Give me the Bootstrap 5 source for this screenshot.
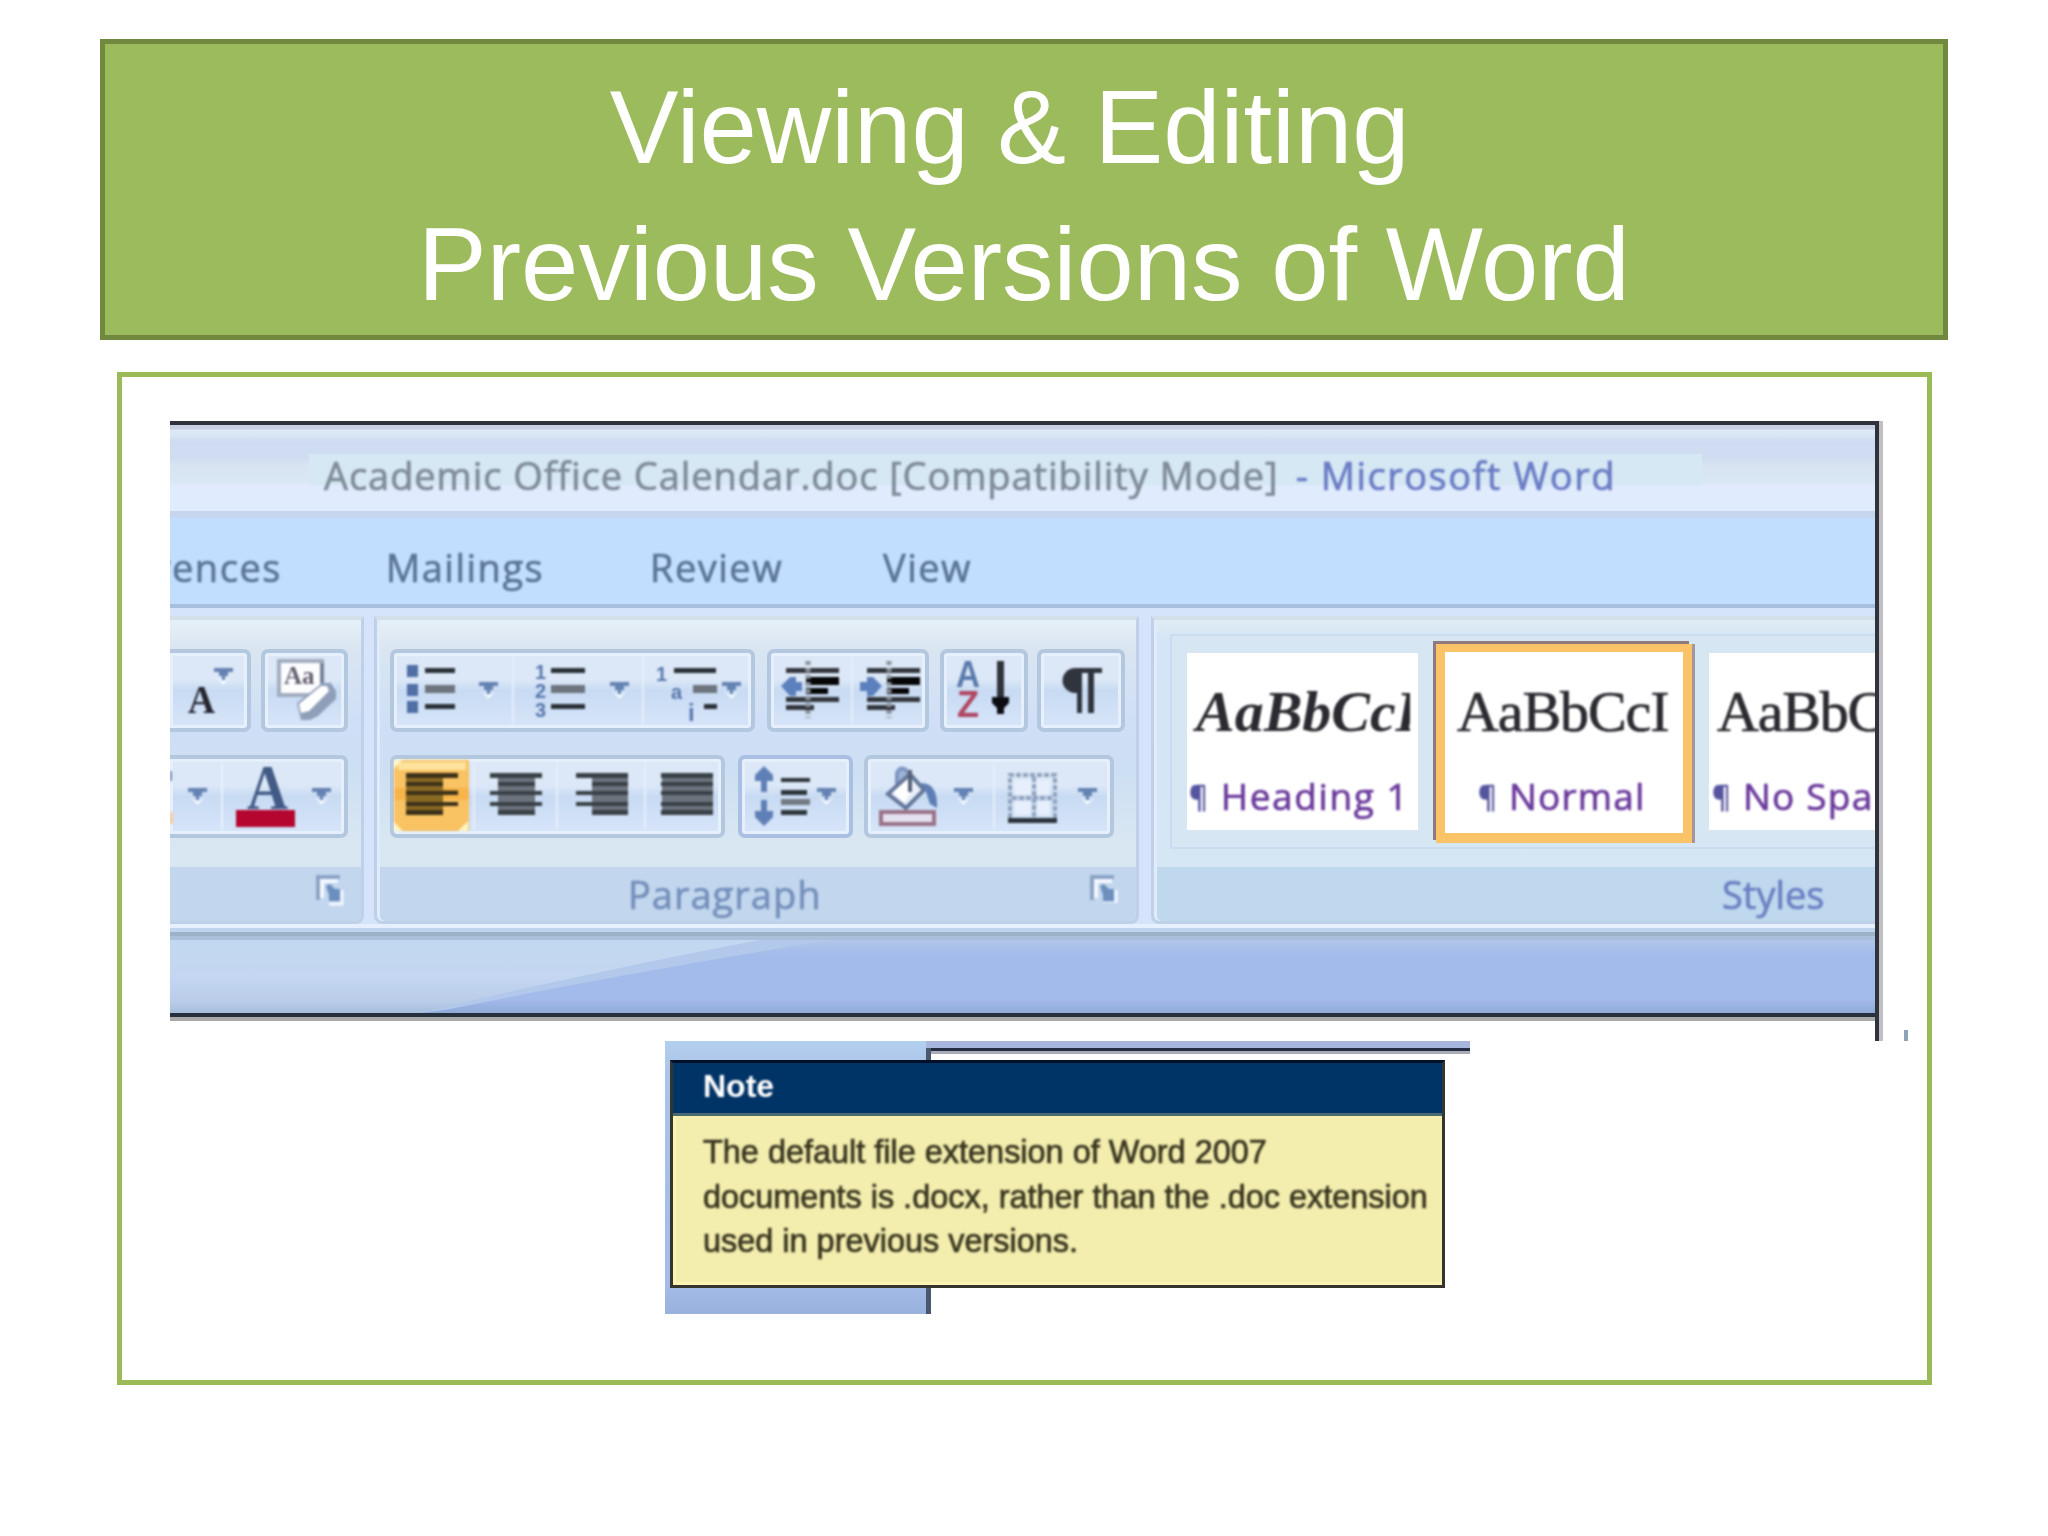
<!DOCTYPE html>
<html lang="en">
<head>
<meta charset="utf-8">
<title>Viewing &amp; Editing Previous Versions of Word</title>
<link rel="stylesheet" href="https://cdn.jsdelivr.net/npm/bootstrap@5.3.0/dist/css/bootstrap.min.css">
<script src="https://cdn.jsdelivr.net/npm/bootstrap@5.3.0/dist/js/bootstrap.bundle.min.js"></script>
<style>
body{width:2048px;height:1536px;overflow:hidden;background:#fff;font-family:"Liberation Sans",Arial,sans-serif}
.banner{margin:39px 100px 0;height:301px;border:5px solid #71893f;background:#9cbb5c;color:#fff;padding-top:15px}
.banner h1{font-size:103px;line-height:137px;font-weight:400;white-space:nowrap}
.panel{margin:32px 116px 0 117px;height:1013px;border:5px solid #9bbb59;padding:44px 0 0 48px}
.shot{height:620px}
.window{width:1705px;font-family:"Open Sans","Noto Sans",sans-serif;white-space:nowrap;overflow:hidden}
.edge-top{height:4px;background:#2f313b}
.edge-right{width:8px;border-left:4px solid #30333c;background:#c0c0c4}
.tick{width:4px;height:11px;margin-left:21px;background:#8fa3b8}
.soft{filter:blur(.9px)}
.inked{-webkit-text-stroke:.7px currentColor}
.titlebar{height:86px;padding:29px 0 0 139px;background:linear-gradient(#c6cfe3 0 4px,#dde9f6 5px,#dae6f3 11px,#cedbf1 16px,#d0ddf1 34px,#d8e4f1 40px,#d9e6f3 55px,#e0ebfd 62px)}
.caption-strip{width:1393px;height:31px;background:#d6e8f4;padding-left:15px;font-size:38px;line-height:43px;color:#7f8b98}
.caption-strip .doc{letter-spacing:.93px}
.caption-strip .app{color:#6a7cc4;letter-spacing:1.5px;padding-left:6px}
.rule-a{height:7px;background:#c6d6ee}
.tabs{height:86px;background:#c1deff;padding-top:14px;font-size:38px;line-height:70px;color:#5c7596;letter-spacing:1.5px}
.rule-b{height:4px;background:#a8c0de}
.ribbon{height:316px;background:#d6e4fb;padding-top:8px}
.group{height:308px;border:3px solid #bfd1e8;border-top:4px solid #d3dfe9;border-radius:0 0 8px 8px;box-shadow:inset 3px 0 #e0ecfc;background:linear-gradient(#e6f0f8 0,#d9e5f1 30px,#cfdff6 100px,#cddff3 150px,#d9e7f2 225px,#d9e7f2 247px,#c2d7ee 247px)}
.group-font{width:194px;border-left:0;border-radius:0 0 8px 0;margin-right:10px;box-shadow:none}
.group-para{width:765px;padding:0 0 0 13px;margin-right:12px}
.group-styles{width:724px;border-right:0;border-radius:0 0 0 8px;background:linear-gradient(#e0ecf4 0,#d3e5f6 20px,#d5e6f5 247px,#c0d8ee 247px)}
.btn-line{height:106px;padding-top:29px}
.tool-set{display:block;height:83px;border:4px solid #b3c7df;border-radius:7px;background:linear-gradient(#dce8f7 0 35%,#c8dbf3 50%,#d7e5f9);box-shadow:inset 0 0 0 3px #e6f0fd}
.open-left{border-left:0;border-radius:0 7px 7px 0}
.strip-label{height:56px;font-size:38px;line-height:54px;color:#7590bb}
.para{letter-spacing:1px}
.gallery{margin:14px 0 18px 16px;height:215px;background:#d6e7f3;border:2px solid #c9dcf2;border-right:0;padding-left:15px}
.style-tile{height:177px;background:#fff;overflow:hidden;color:#2a2a30;flex-shrink:0}
.style-tile .sample{height:96px;padding-top:15px;line-height:88px;font-family:"Liberation Serif","Times New Roman",serif;font-size:58px}
.style-tile .style-name{font-size:37px;line-height:62px;height:62px;margin-top:16px;color:#6b3a9c;letter-spacing:1.6px}
.style-name .pil{color:#55559f;font-size:29px;position:relative;top:-3px}
.chosen{height:199px;width:256px;margin:8px 17px 0 18px;border:8px solid #fbc368;border-width:8px 9px 10px;box-shadow:-3px -3px 0 #8f7a80,3px 0 0 #a5979f}
.foot-a{height:4px;background:#e6effd}.foot-b{height:4px;background:#bfd5ef}.foot-c{height:8px;background:linear-gradient(#9cb2c9 50%,#a9c0da 50%)}
.desk{height:73px;display:block}
.edge-bottom{height:8px;background:linear-gradient(#26313d 50%,#a9a9aa 50%)}
.note-shot{margin-left:495px;width:805px;height:273px}
.note-back{width:261px;height:273px;background:linear-gradient(#b3cfee,#aac3e8 12%,#a3bbe6 90%,#98b2dd)}
.page-rest{width:544px;height:273px;background:linear-gradient(#a7b6dc 0 7px,#252d42 7px 10px,#a9abb8 10px 13px,#fff 13px)}
.page-edge{width:5px;height:266px;margin-top:7px;background:#49586c}
.notebox{left:5px;top:19px;width:775px;height:228px;border:3px solid #34352f;border-top-color:#001028;background:#f3edae;box-shadow:inset 3px -3px #fdf4b4;color:#38351f}
.notehead{height:53px;margin:0;background:#003366;border-bottom:3px solid #486a70;color:#fff;font-weight:700;font-size:32px;line-height:46px;padding-left:30px}
.notetext{padding:14px 0 0 30px;font-size:32.45px;line-height:44.6px;white-space:nowrap}
</style>
</head>
<body>
<svg width="0" height="0" class="position-absolute">
 <defs>
  <g id="drop"><path d="M0 0h19v4h-5v4h-3v4H8V8H5V4H0z" fill="#6482b2"/><path d="M2 9l7.500 8 7.500-8-5 3h-5z" fill="#f2f7ff"/></g>
  <g id="launch"><path d="M2 25V2h22" fill="none" stroke="#8ba3c6" stroke-width="4"/><path d="M6 23V6h16" fill="none" stroke="#f4f8ff" stroke-width="4"/><path d="M10 11l4-2 5 5h5v12H13v-6z" fill="#6c8fbd"/><path d="M13 29h13V15" fill="none" stroke="#f4f8ff" stroke-width="3"/></g>
  <g id="indentlines"><path d="M0 7h53v5H0zM0 36h53v5H0zM0 44h28v5H0z" fill="#33373d"/><path d="M20 16h33v8H20zM20 27h22v6H20z" fill="#050608"/><path d="M22 0v57" stroke="#8b929c" stroke-width="5" stroke-dasharray="4 3"/></g>
 </defs>
</svg>

<header class="banner text-center"><h1 class="m-0">Viewing &amp; Editing&nbsp;<br>Previous Versions of Word</h1></header>

<main class="panel">
 <div class="shot d-flex">
  <div class="window">
   <div class="edge-top"></div>
   <div class="titlebar"><div class="caption-strip"><div class="soft inked"><span class="doc">Academic Office Calendar.doc [Compatibility Mode]</span><span class="app"> - Microsoft Word</span></div></div></div>
   <div class="rule-a"></div>
   <nav class="tabs d-flex inked">
    <span class="soft" style="margin-left:-15px;width:231px">rences</span><span class="soft" style="width:264px">Mailings</span><span class="soft" style="width:233px">Review</span><span class="soft">View</span>
   </nav>
   <div class="rule-b"></div>
   <div class="ribbon d-flex">
    <section class="group group-font">
     <div class="btn-line d-flex">
      <div class="tool-set open-left" style="width:81px;margin-right:10px"><svg class="soft d-block" width="77" height="75" viewBox="170 653 77 75">
       <text x="188" y="713" font-family="Liberation Serif" font-weight="700" font-size="40" fill="#25262f" textLength="27" lengthAdjust="spacingAndGlyphs">A</text><use href="#drop" x="214" y="668"/></svg></div>
      <div class="tool-set" style="width:87px"><svg class="soft d-block" width="79" height="75" viewBox="265 653 79 75">
       <path d="M279 661h43v34h-43z" fill="#fdfdff" stroke="#a2adbf" stroke-width="4"/><path d="M322 663v20" stroke="#74829a" stroke-width="4"/><text x="284" y="684" font-family="Liberation Serif" font-weight="700" font-size="25" fill="#65606f">Aa</text>
       <path d="M297 703l25-20h9l5 8v8l-18 17-8 4h-9z" fill="#8f9fba"/><path d="M299 704l22-18h6l2 5-20 20-8 2z" fill="#fff"/></svg></div>
     </div>
     <div class="btn-line d-flex">
      <div class="tool-set open-left" style="width:178px"><svg class="soft d-block" width="174" height="75" viewBox="170 759 174 75">
       <path d="M170 771v10" stroke="#6e86b4" stroke-width="4"/><path d="M170 812h3v12h-3z" fill="#f9c89d"/><use href="#drop" x="188" y="788"/><path d="M222 762v68" stroke="#e9f2fd" stroke-width="2"/>
       <text x="247" y="809" font-family="Liberation Serif" font-weight="700" font-size="63" fill="#425a85" textLength="41" lengthAdjust="spacingAndGlyphs">A</text><path d="M236 810h59v17h-59z" fill="#b5062f"/><use href="#drop" x="312" y="788"/></svg></div>
     </div>
     <div style="height:35px"></div>
     <svg class="soft d-block" width="190" height="50" viewBox="170 867 190 50"><use href="#launch" x="316" y="875"/></svg>
    </section>

    <section class="group group-para">
     <div class="btn-line d-flex">
      <div class="tool-set" style="width:365px;margin-right:12px"><svg class="soft d-block" width="357" height="75" viewBox="394 653 357 75">
       <path d="M407 665h11v12h-11zM407 684h11v12h-11zM407 701h11v12h-11z" fill="#4f6fa5"/>
       <path d="M425 668h30v5h-30zM425 704h30v5h-30zM551 668h34v5h-34zM551 704h34v5h-34zM674 668h42v5h-42zM704 704h13v5h-13z" fill="#2b3138"/>
       <path d="M425 685h30v8h-30zM551 685h34v8h-34zM693 685h24v8h-24z" fill="#6d747d"/>
       <g font-family="Liberation Sans" font-weight="700" font-size="20" fill="#5877ad"><text x="535" y="679">1</text><text x="535" y="698">2</text><text x="535" y="717">3</text><text x="656" y="681">1</text><text x="671" y="699">a</text><text x="688" y="721" font-size="24">i</text></g>
       <path d="M513 656v68M643 656v68" stroke="#e6effc" stroke-width="2"/>
       <use href="#drop" x="479" y="682"/><use href="#drop" x="610" y="682"/><use href="#drop" x="722" y="682"/></svg></div>
      <div class="tool-set" style="width:162px;margin-right:11px"><svg class="soft d-block" width="154" height="75" viewBox="771 653 154 75">
       <use href="#indentlines" x="786" y="661"/><path d="M781 686l9-9h6v5h6v9h-6v5h-6z" fill="#5c80bd"/>
       <path d="M852 656v68" stroke="#e6effc" stroke-width="2"/>
       <use href="#indentlines" x="867" y="661"/><path d="M882 686l-9-9h-6v5h-7v9h7v5h6z" fill="#5c80bd"/></svg></div>
      <div class="tool-set" style="width:88px;margin-right:9px"><svg class="soft d-block" width="80" height="75" viewBox="944 653 80 75">
       <g font-family="Liberation Sans" font-weight="700"><text x="956" y="687" font-size="36" fill="#5a7aab" textLength="24" lengthAdjust="spacingAndGlyphs">A</text><text x="957" y="717" font-size="36" fill="#b04763">Z</text></g>
       <path d="M997 661h7v36h-7z" fill="#30333a"/><path d="M992 697h17v6l-5 5v6h-7v-6l-5-5z" fill="#0b0d12"/></svg></div>
      <div class="tool-set" style="width:88px"><svg class="soft d-block" width="80" height="75" viewBox="1041 653 80 75">
       <path d="M1102 668h-27a12 12 0 0 0 0 25h2v20h5v-40h6v40h6v-40h8z" fill="#30343d"/></svg></div>
     </div>
     <div class="btn-line d-flex">
      <div class="tool-set" style="width:335px;margin-right:13px"><svg class="soft d-block" width="327" height="75" viewBox="394 759 327 75">
       <path d="M394 760h75v71h-75z" fill="#f9c263"/><path d="M398 762h68v8h-68z" fill="#fde29b"/><path d="M394 788h75v12h-75z" fill="#f7b44a"/><path d="M394 831v-9l9 9zM468 831v-10l-10 10zM394 760h8l-8 9z" fill="#fff4c4"/>
       <path d="M406 776h37v36h-37z" fill="#8a6a22"/><path d="M443 790h15v4h-15z" fill="#a77f33"/>
       <path d="M498 776h37v36h-37zM592 776h36v36h-36zM662 776h51v36h-51z" fill="#6c737c"/>
       <path d="M406 773h52v5h-52zM406 782h37v4h-37zM406 791h52v4h-52zM406 802h52v4h-52zM406 810h37v5h-37z" fill="#3d3119"/>
       <path d="M490 773h52v5h-52zM498 782h37v4h-37zM490 791h52v4h-52zM490 802h52v4h-52zM498 810h37v5h-37zM576 773h52v5h-52zM592 782h36v4h-36zM576 791h52v4h-52zM576 802h52v4h-52zM592 810h36v5h-36zM661 773h52v5h-52zM661 782h52v4h-52zM661 791h52v4h-52zM661 802h52v4h-52zM661 810h52v5h-52z" fill="#3a4047"/>
       <path d="M474 762v68M557 762v68M645 762v68" stroke="#e6effc" stroke-width="2"/></svg></div>
      <div class="tool-set" style="width:115px;margin-right:11px;border-color:#a9bfe4"><svg class="soft d-block" width="107" height="75" viewBox="742 759 107 75">
       <path d="M764 766l9 9v6h-6v11h-6v-11h-6v-6zM764 826l9-9v-6h-6v-11h-6v11h-6v6z" fill="#5f80b6"/>
       <path d="M781 778h29v4h-29zM781 790h26v5h-26zM781 810h26v5h-26z" fill="#2f353c"/><path d="M781 799h29v6h-29z" fill="#737a83"/><use href="#drop" x="817" y="788"/></svg></div>
      <div class="tool-set" style="width:250px"><svg class="soft d-block" width="242" height="75" viewBox="868 759 242 75">
       <path d="M897 785v-12q4-9 12 0v8" fill="#9fb3d6" stroke="#7f97c2" stroke-width="4"/><path d="M888 794l22-20 14 16-18 18z" fill="#e9eff8" stroke="#64779a" stroke-width="4"/><path d="M893 792l14-12 5 10-8 12z" fill="#fff"/><path d="M910 770v22" stroke="#55627c" stroke-width="4"/><path d="M921 783q17 0 16 25l-7-4-4-12z" fill="#5d7eb4"/>
       <path d="M881 812h53v12h-53z" fill="#e4e0f0" stroke="#9a7388" stroke-width="4"/><use href="#drop" x="954" y="788"/>
       <path d="M994 762v68" stroke="#e6effc" stroke-width="2"/>
       <path d="M1014 780h17v15h-17zM1037 780h13v15h-13zM1014 801h17v14h-17zM1037 801h13v14h-13z" fill="#e6effb"/><path d="M1010 818v-43h45v43M1034 777v40M1012 798h42" fill="none" stroke="#93a3be" stroke-width="4" stroke-dasharray="5 2"/><path d="M1008 818h49v5h-49z" fill="#2b333d"/><use href="#drop" x="1078" y="788"/></svg></div>
     </div>
     <div style="height:35px"></div>
     <div class="strip-label d-flex soft inked"><span class="para" style="margin-left:238px;width:462px">Paragraph</span><svg width="30" height="36" viewBox="0 -8 30 36"><use href="#launch"/></svg></div>
    </section>

    <section class="group group-styles">
     <div class="gallery d-flex">
      <div class="style-tile" style="width:231px;margin-top:17px"><div class="soft"><div class="sample fst-italic fw-bold" style="padding-left:9px;width:223px;overflow:hidden">AaBbCcI</div><div class="style-name inked" style="padding-left:2px"><span class="pil">¶</span> Heading 1</div></div></div>
      <div class="style-tile chosen"><div class="soft"><div class="sample inked" style="padding-left:12px;margin-top:1px;letter-spacing:-1.100px">AaBbCcI</div><div class="style-name inked" style="padding-left:33px;letter-spacing:1.2px"><span class="pil">¶</span> Normal</div></div></div>
      <div class="style-tile" style="width:175px;margin-top:17px"><div class="soft"><div class="sample inked" style="padding-left:8px;letter-spacing:-1.200px">AaBbC</div><div class="style-name inked" style="padding-left:3px;letter-spacing:1.2px"><span class="pil">¶</span> No Spa</div></div></div>
     </div>
     <div class="strip-label soft inked" style="padding-left:568px;color:#6c80c3">Styles</div>
    </section>
   </div>
   <div class="foot-a"></div><div class="foot-b"></div><div class="foot-c"></div>
   <svg class="desk" width="1705" height="73" viewBox="0 0 1705 73" preserveAspectRatio="none">
    <defs><linearGradient id="lo" x1="0" y1="0" x2="0" y2="1"><stop offset="0" stop-color="#b0c6ea"/><stop offset=".2" stop-color="#a3bbea"/><stop offset=".8" stop-color="#a3bbea"/><stop offset="1" stop-color="#90abd9"/></linearGradient>
    <linearGradient id="hi" x1="0" y1="0" x2="0" y2="1"><stop offset="0" stop-color="#c2d8f0"/><stop offset=".5" stop-color="#c4d6f1"/><stop offset=".85" stop-color="#b9cce8"/><stop offset="1" stop-color="#a6bfdc"/></linearGradient></defs>
    <path d="M0 0h1705v73H0z" fill="url(#lo)"/><path d="M0 0h600Q430 30 250 73H0z" fill="url(#hi)"/><path d="M590 0Q430 30 250 73l30-4Q440 36 660 0z" fill="#b2c9eb"/>
   </svg>
   <div class="edge-bottom"></div>
  </div>
  <div class="edge-right"></div><div class="tick align-self-end"></div>
 </div>

 <div class="note-shot position-relative d-flex">
  <div class="note-back"></div>
  <div class="page-rest"><div class="d-flex"><div class="page-edge"></div></div></div>
  <div class="notebox position-absolute"><div class="notehead"><div class="soft">Note</div></div><div class="notetext soft inked">The default file extension of Word 2007<br>documents is .docx, rather than the .doc extension<br>used in previous versions.</div></div>
 </div>
</main>
</body>
</html>
